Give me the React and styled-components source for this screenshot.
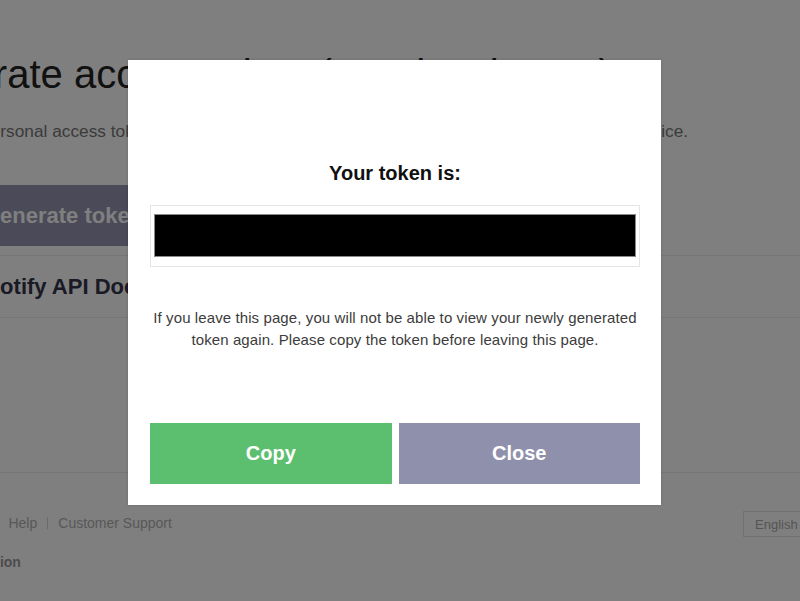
import styled, { createGlobalStyle } from "styled-components";

const GlobalStyle = createGlobalStyle`
    html, body {
        margin: 0;
        padding: 0;
        background: #ffffff;
        font-family: "Liberation Sans", Arial, sans-serif;
        overflow: hidden;
    }
`

const Page = styled.div`
    position: relative;
    width: 800px;
    height: 601px;
    overflow: hidden;
`

const Content = styled.main`
    width: 930px;
    margin-left: -95px;
    padding-top: 50px;
`

const Title = styled.h1`
    margin: 0 0 0 -9px;
    font-size: 40px;
    line-height: 48px;
    font-weight: 400;
    color: #222;
    white-space: nowrap;
`

const Lead = styled.p`
    margin: 21px 0 0 5px;
    font-size: 17.3px;
    line-height: 24px;
    color: #777;
    white-space: nowrap;
`

const GenerateButton = styled.button`
    display: block;
    margin-top: 42px;
    width: 316px;
    height: 61px;
    border: none;
    background: #9494b0;
    color: #fff;
    font-family: inherit;
    font-size: 22px;
    font-weight: bold;
`

const LinkList = styled.ul`
    list-style: none;
    margin: 9px 0 0;
    padding: 0;
    border-top: 1px solid #ececec;
`

const LinkItem = styled.li`
    height: 61px;
    display: flex;
    align-items: center;
    padding-left: 23px;
    border-bottom: 1px solid #ececec;
    font-size: 22px;
    font-weight: bold;
    color: #34344a;
    white-space: nowrap;
`

const Footer = styled.footer`
    margin-top: 154px;
    border-top: 1px solid #ececec;
    padding-top: 38px;
`

const FooterRow = styled.div`
    display: flex;
    align-items: center;
    justify-content: space-between;
`

const FooterLinks = styled.nav`
    display: flex;
    align-items: center;
    margin-top: -2px;
    font-size: 14px;
    color: #b0b0b0;
    white-space: nowrap;
`

const Sep = styled.span`
    display: inline-block;
    width: 1px;
    height: 12px;
    background: #d6d6d6;
    margin: 0 10px;
`

const LangSelect = styled.div`
    width: 79px;
    height: 24px;
    border: 1px solid #e4e4e4;
    box-sizing: content-box;
    display: flex;
    align-items: center;
    padding-left: 11px;
    font-size: 13px;
    color: #aaa;
`

const Copyright = styled.div`
    margin-top: 17px;
    font-size: 14px;
    font-weight: bold;
    color: #999;
    white-space: nowrap;
`

const Overlay = styled.div`
    position: absolute;
    inset: 0;
    background: rgba(0, 0, 0, 0.5);
`

const Modal = styled.div`
    position: absolute;
    left: 128px;
    top: 60px;
    width: 533px;
    box-sizing: border-box;
    padding: 101px 21px 21px 22px;
    background: #fff;
    box-shadow: 0 0 3px rgba(0, 0, 0, 0.15);
`

const ModalTitle = styled.h2`
    margin: 0;
    font-size: 20px;
    line-height: 24px;
    font-weight: bold;
    color: #111;
    text-align: center;
`

const TokenBox = styled.div`
    margin-top: 20px;
    border: 1px solid #e6e6e6;
    padding: 8px 3px 9px;
`

const TokenValue = styled.div`
    height: 41px;
    background: #000;
    border: 1px solid #8a8a8a;
`

const Notice = styled.p`
    margin: 40px 0 0;
    font-size: 15px;
    line-height: 22px;
    letter-spacing: 0.1px;
    color: #3c3c3c;
    text-align: center;
`

const Actions = styled.div`
    display: flex;
    gap: 7px;
    margin-top: 72px;
`

const ActionButton = styled.button`
    flex: 1;
    height: 61px;
    border: none;
    background: ${props => props.$primary ? "#5cbf6f" : "#8f90ab"};
    color: #fff;
    font-family: inherit;
    font-size: 20px;
    font-weight: bold;
`

export default function App() {
    return (
        <Page>
            <GlobalStyle />
            <Content>
                <Title>Generate access token (For developers)</Title>
                <Lead>By using personal access tokens, you can configure notifications without having to add a web-service.</Lead>
                <GenerateButton>Generate token</GenerateButton>
                <LinkList>
                    <LinkItem>LINE Notify API Document</LinkItem>
                </LinkList>
                <Footer>
                    <FooterRow>
                        <FooterLinks>
                            <span>Terms of Use</span>
                            <Sep />
                            <span>Help</span>
                            <Sep />
                            <span>Customer Support</span>
                        </FooterLinks>
                        <LangSelect>English</LangSelect>
                    </FooterRow>
                    <Copyright>LINE Corporation</Copyright>
                </Footer>
            </Content>
            <Overlay />
            <Modal>
                <ModalTitle>Your token is:</ModalTitle>
                <TokenBox>
                    <TokenValue />
                </TokenBox>
                <Notice>
                    If you leave this page, you will not be able to view your newly generated<br />
                    token again. Please copy the token before leaving this page.
                </Notice>
                <Actions>
                    <ActionButton $primary>Copy</ActionButton>
                    <ActionButton>Close</ActionButton>
                </Actions>
            </Modal>
        </Page>
    )
}
